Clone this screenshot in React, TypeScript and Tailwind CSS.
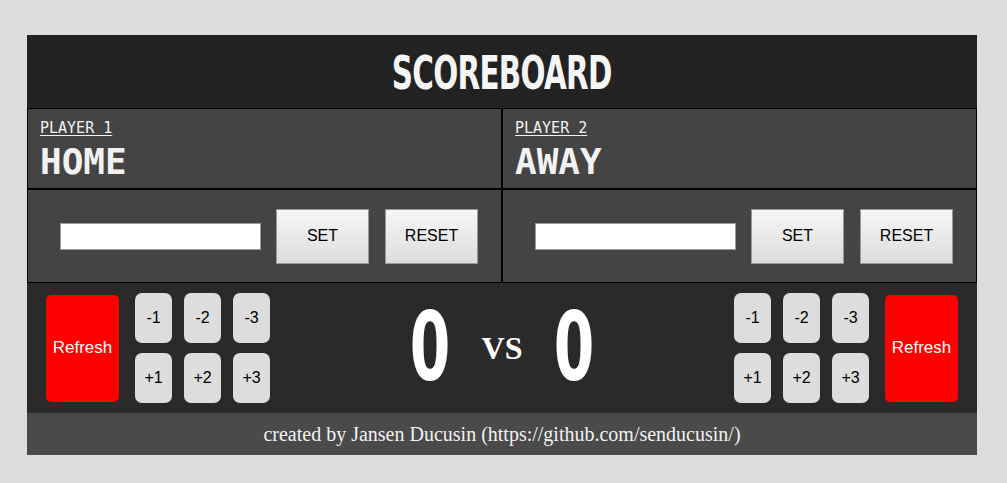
import { useState } from 'react';

type Side = {
  label: string;
  name: string;
};

const sides: Side[] = [
  { label: 'PLAYER 1', name: 'HOME' },
  { label: 'PLAYER 2', name: 'AWAY' },
];

// no Impact in the sandbox, so squeeze a heavy sans instead
const heavy = "font-['DejaVu_Sans',sans-serif] font-bold";

function PlayerCard({ side }: { side: Side }) {
  return (
    <div className="h-[81px] border border-black bg-[#444] px-[12px] pt-[10px] text-[#f2f2f2]">
      <p className="font-['DejaVu_Sans_Mono',monospace] text-[15px] leading-[18px] underline underline-offset-2">
        {side.label}
      </p>
      <h2 className="mt-[7px] font-['DejaVu_Sans_Mono',monospace] text-[36px] font-bold leading-[36px]">
        {side.name}
      </h2>
    </div>
  );
}

function NameForm() {
  const [value, setValue] = useState('');
  return (
    <div className="flex h-[94px] items-center border border-black bg-[#444] pl-[32px]">
      <input
        value={value}
        onChange={(e) => setValue(e.target.value)}
        className="h-[27px] w-[201px] border border-[#999] bg-white px-1 text-sm"
      />
      <button className="ml-[15px] h-[55px] w-[93px] border border-[#999] bg-gradient-to-b from-[#f7f7f7] to-[#dcdcdc] font-['Liberation_Sans',sans-serif] text-[16px] text-black">
        SET
      </button>
      <button className="ml-[16px] h-[55px] w-[93px] border border-[#999] bg-gradient-to-b from-[#f7f7f7] to-[#dcdcdc] font-['Liberation_Sans',sans-serif] text-[16px] text-black">
        RESET
      </button>
    </div>
  );
}

function Controls({ reverse }: { reverse?: boolean }) {
  const refresh = (
    <button className="h-[107px] w-[73px] rounded-[5px] bg-[#ff0000] font-['Liberation_Sans',sans-serif] text-[17px] text-white">
      Refresh
    </button>
  );
  const steps = ['-1', '-2', '-3', '+1', '+2', '+3'];
  const grid = (
    <div className="grid grid-cols-3 gap-x-[12px] gap-y-[10px]">
      {steps.map((s) => (
        <button
          key={s}
          className="h-[50px] w-[37px] rounded-[7px] bg-[#dddddd] font-['Liberation_Sans',sans-serif] text-[16px] text-black"
        >
          {s}
        </button>
      ))}
    </div>
  );
  return (
    <div className="flex w-[224px] items-center gap-[16px]">
      {reverse ? grid : refresh}
      {reverse ? refresh : grid}
    </div>
  );
}

function Score({ value }: { value: number }) {
  return (
    <span className={`${heavy} inline-flex w-[38px] scale-x-[0.62] justify-center text-[94px] leading-[80px]`}>
      {value}
    </span>
  );
}

export default function App() {
  return (
    <div className="min-h-[483px] bg-[#dcdcdc] pt-[35px]">
      <div className="ml-[27px] w-[950px]">
        <header className="flex h-[73px] items-center justify-center bg-[#222] pt-[3px]">
          <h1 className={`${heavy} inline-block scale-x-[0.64] text-[46px] tracking-tight text-[#f5f5f5]`}>
            SCOREBOARD
          </h1>
        </header>
        <div className="grid grid-cols-2">
          {sides.map((s) => (
            <PlayerCard key={s.label} side={s} />
          ))}
          <NameForm />
          <NameForm />
        </div>
        <div className="flex h-[130px] items-center justify-between bg-[#2a2a2a] px-[19px]">
          <Controls />
          <div className="flex items-center gap-[33px] text-white">
            <Score value={0} />
            <span className="font-['Liberation_Serif',serif] text-[32px] font-bold">VS</span>
            <Score value={0} />
          </div>
          <Controls reverse />
        </div>
        <footer className="flex h-[42px] items-center justify-center bg-[#4a4a4a] font-['Liberation_Serif',serif] text-[20px] text-[#f2f2f2]">
          created by Jansen Ducusin (https://github.com/senducusin/)
        </footer>
      </div>
    </div>
  );
}
